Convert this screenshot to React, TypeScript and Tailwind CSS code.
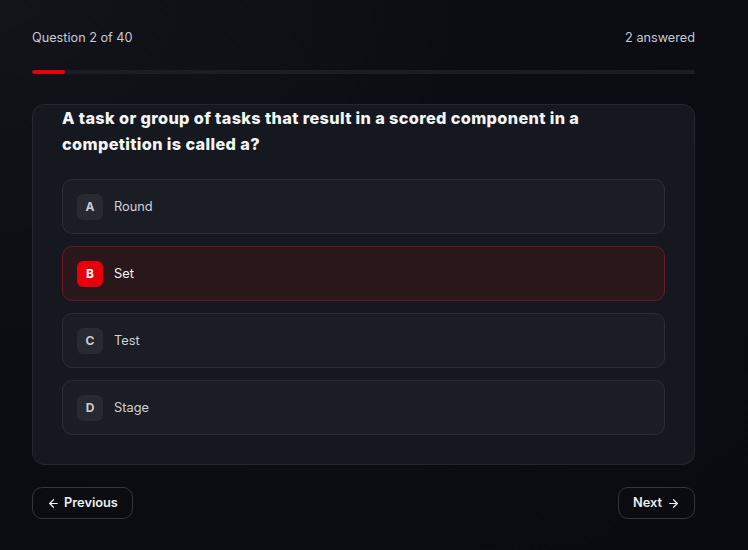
import React from "react";

const options = [
  { letter: "A", text: "Round", selected: false },
  { letter: "B", text: "Set", selected: true },
  { letter: "C", text: "Test", selected: false },
  { letter: "D", text: "Stage", selected: false },
];

function ArrowLeft() {
  return (
    <svg width="13" height="13" viewBox="0 0 24 24" fill="none" stroke="currentColor" strokeWidth="2.2" strokeLinecap="round" strokeLinejoin="round">
      <path d="M19 12H5" />
      <path d="M12 19l-7-7 7-7" />
    </svg>
  );
}

function ArrowRight() {
  return (
    <svg width="13" height="13" viewBox="0 0 24 24" fill="none" stroke="currentColor" strokeWidth="2.2" strokeLinecap="round" strokeLinejoin="round">
      <path d="M5 12h14" />
      <path d="M12 5l7 7-7 7" />
    </svg>
  );
}

export default function App() {
  return (
    <div
      className="min-h-[550px] w-full bg-[#0a0c12] bg-[radial-gradient(ellipse_at_top_left,#12141a_0%,#0b0d13_45%,#090b10_100%)] text-[#d1d5db]"
      style={{ fontFamily: "Inter, 'Liberation Sans', sans-serif" }}
    >
      <div className="w-[663px] ml-[32px] pt-[28px]">
        <div className="flex justify-between items-center text-[12.7px] leading-[20px] text-[#c8cbd2]">
          <span>Question 2 of 40</span>
          <span>2 answered</span>
        </div>
        <div className="mt-[22px] h-[4px] w-full rounded-full bg-[#1a1d24] overflow-hidden">
          <div className="h-full w-[33px] rounded-full bg-[#e5000b]" />
        </div>

        <div className="mt-[30px] rounded-[12px] border border-[#24272e] bg-[#15181e] px-[29px] pb-[29px]">
          <h2 className="text-[16.3px] leading-[26px] font-extrabold text-[#f3f4f6] pr-[20px] tracking-[0.35px]">
            A task or group of tasks that result in a scored component in a competition is called a?
          </h2>
          <div className="mt-[22px] flex flex-col gap-[12px]">
            {options.map((o) => (
              <div
                key={o.letter}
                className={
                  o.selected
                    ? "h-[55px] flex items-center gap-[11px] px-[14px] rounded-[10px] border border-[#6a1a21] bg-[#2a171c]"
                    : "h-[55px] flex items-center gap-[11px] px-[14px] rounded-[10px] border border-[#2a2d34] bg-[#1a1d23]"
                }
              >
                <div
                  className={
                    o.selected
                      ? "w-[26px] h-[26px] rounded-[6px] bg-[#e5000b] text-white flex items-center justify-center text-[12px] font-bold"
                      : "w-[26px] h-[26px] rounded-[6px] bg-[#272a31] text-[#c9ccd3] flex items-center justify-center text-[12px] font-bold"
                  }
                >
                  {o.letter}
                </div>
                <span className={o.selected ? "text-[12.8px] text-[#f5f5f5]" : "text-[12.8px] text-[#cfd2d8]"}>{o.text}</span>
              </div>
            ))}
          </div>
        </div>

        <div className="mt-[22px] flex justify-between">
          <button className="h-[32px] pl-[14px] pr-[14px] flex items-center gap-[4px] rounded-[10px] border border-[#32353c] text-[12.8px] font-semibold text-[#eceef1]">
            <ArrowLeft />
            Previous
          </button>
          <button className="h-[32px] pl-[14px] pr-[14px] flex items-center gap-[5px] rounded-[10px] border border-[#32353c] text-[12.8px] font-semibold text-[#eceef1]">
            Next
            <ArrowRight />
          </button>
        </div>
      </div>
    </div>
  );
}
